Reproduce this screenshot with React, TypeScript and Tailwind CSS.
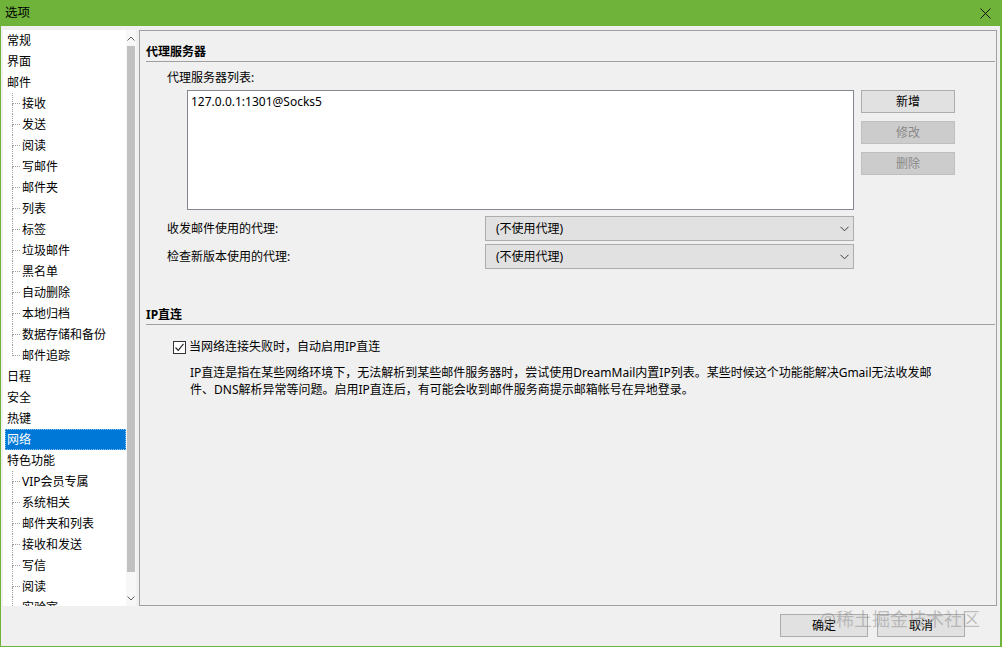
import React from "react";

type Item = { label: string; child?: boolean; last?: boolean; selected?: boolean };

const items: Item[] = [
  { label: "常规" },
  { label: "界面" },
  { label: "邮件" },
  { label: "接收", child: true },
  { label: "发送", child: true },
  { label: "阅读", child: true },
  { label: "写邮件", child: true },
  { label: "邮件夹", child: true },
  { label: "列表", child: true },
  { label: "标签", child: true },
  { label: "垃圾邮件", child: true },
  { label: "黑名单", child: true },
  { label: "自动删除", child: true },
  { label: "本地归档", child: true },
  { label: "数据存储和备份", child: true },
  { label: "邮件追踪", child: true, last: true },
  { label: "日程" },
  { label: "安全" },
  { label: "热键" },
  { label: "网络", selected: true },
  { label: "特色功能" },
  { label: "VIP会员专属", child: true },
  { label: "系统相关", child: true },
  { label: "邮件夹和列表", child: true },
  { label: "接收和发送", child: true },
  { label: "写信", child: true },
  { label: "阅读", child: true },
  { label: "实验室", child: true },
];

function TreeRow({ item }: { item: Item }) {
  if (item.child) {
    return (
      <div className="flex h-[21px] shrink-0 items-stretch">
        <div className="ml-[9px] flex w-[8px] flex-col">
          <div className="h-[11px] border-l border-b border-dotted border-[#a0a0a0]" />
          <div className={item.last ? "flex-1" : "flex-1 border-l border-dotted border-[#a0a0a0]"} />
        </div>
        <div className="ml-[2px] flex items-center whitespace-nowrap leading-[16px]">{item.label}</div>
      </div>
    );
  }
  return (
    <div className="flex h-[21px] shrink-0 items-stretch">
      <div
        className={
          item.selected
            ? "ml-[2px] flex flex-1 items-center border border-dotted border-[#8cc4f0] bg-[#0078d7] pl-[1px] text-white leading-[16px]"
            : "ml-[2px] flex flex-1 items-center pl-[2px] leading-[16px]"
        }
      >
        {item.label}
      </div>
    </div>
  );
}

function Chevron() {
  return (
    <svg width="9" height="6" viewBox="0 0 9 6">
      <path d="M0.5 0.8 L4.5 4.8 L8.5 0.8" fill="none" stroke="#3a3a3a" strokeWidth="1" />
    </svg>
  );
}

function Combo() {
  return (
    <div className="flex h-[25px] w-[369px] items-center justify-between border border-[#adadad] bg-[#e1e1e1] pl-[10px] pr-[4px] leading-[16px]">
      <span>(不使用代理)</span>
      <Chevron />
    </div>
  );
}

function Btn({ label, disabled, w = "w-[94px]" }: { label: string; disabled?: boolean; w?: string }) {
  return (
    <div
      className={
        disabled
          ? `flex h-[23px] ${w} items-center justify-center border border-[#bfbfbf] bg-[#cccccc] text-[#8a8a8a] leading-[16px]`
          : `flex h-[23px] ${w} items-center justify-center border border-[#adadad] bg-[#e1e1e1] leading-[16px]`
      }
    >
      {label}
    </div>
  );
}

export default function App() {
  return (
    <div className="relative flex h-[647px] w-[1002px] flex-col overflow-hidden border-b border-l border-r-2 border-[#6fb33b] bg-[#f0f0f0] font-['Noto_Sans','Noto_Sans_CJK_SC',sans-serif] text-[12px] text-black">
      {/* Title bar */}
      <div className="flex h-[26px] shrink-0 items-center justify-between bg-[#6fb33b] pl-[4px] pr-[9px]">
        <span className="text-[12.5px] leading-[16px]">选项</span>
        <svg width="11" height="11" viewBox="0 0 11 11">
          <path d="M0.5 0.5 L10.5 10.5 M10.5 0.5 L0.5 10.5" stroke="#111" strokeWidth="1" />
        </svg>
      </div>

      {/* Body */}
      <div className="flex h-[580px] shrink-0 pl-[2px] pr-[3px] pt-[4px]">
        {/* Tree */}
        <div className="flex h-[576px] w-[133px] shrink-0 bg-white">
          <div className="flex flex-1 flex-col overflow-hidden">
            {items.map((it, i) => (
              <TreeRow key={i} item={it} />
            ))}
          </div>
          <div className="flex w-[10px] flex-col items-center bg-[#f7f7f7]">
            <div className="flex h-[16px] items-center justify-center">
              <svg width="8" height="5" viewBox="0 0 8 5">
                <path d="M0.5 4.5 L4 1 L7.5 4.5" fill="none" stroke="#606060" strokeWidth="1" />
              </svg>
            </div>
            <div className="h-[526px] w-[8px] bg-[#c1c1c1]" />
            <div className="flex-1" />
            <div className="flex h-[16px] items-center justify-center">
              <svg width="8" height="5" viewBox="0 0 8 5">
                <path d="M0.5 0.5 L4 4 L7.5 0.5" fill="none" stroke="#606060" strokeWidth="1" />
              </svg>
            </div>
          </div>
        </div>

        {/* Right panel */}
        <div className="ml-[3px] flex h-[576px] flex-1 flex-col border border-[#a0a0a0] pl-[6px] pr-[1px]">
          <div className="mt-[13px] border-b border-[#a0a0a0] pb-[1px] font-bold leading-[16px]">代理服务器</div>
          <div className="ml-[21px] mt-[8px] leading-[16px]">代理服务器列表:</div>
          <div className="ml-[41px] mt-[4px] flex">
            <div className="h-[120px] w-[667px] border border-[#828790] bg-white pl-[3px] pt-[3px] leading-[16px]">
              127.0.0.1:1301@Socks5
            </div>
            <div className="ml-[7px] flex flex-col gap-[8px]">
              <Btn label="新增" />
              <Btn label="修改" disabled />
              <Btn label="删除" disabled />
            </div>
          </div>
          <div className="ml-[21px] mt-[6px] flex flex-col gap-[3px]">
            <div className="flex items-center">
              <div className="w-[318px] leading-[16px]">收发邮件使用的代理:</div>
              <Combo />
            </div>
            <div className="flex items-center">
              <div className="w-[318px] leading-[16px]">检查新版本使用的代理:</div>
              <Combo />
            </div>
          </div>

          <div className="mt-[38px] border-b border-[#a0a0a0] pb-[1px] font-bold leading-[16px]">IP直连</div>
          <div className="ml-[27px] mt-[14px] flex items-center">
            <div className="flex h-[13px] w-[13px] items-center justify-center border border-[#333333] bg-white">
              <svg width="11" height="11" viewBox="0 0 11 11">
                <path d="M1.5 5.5 L4.2 8.3 L9.5 1.8" fill="none" stroke="#222" strokeWidth="1.1" />
              </svg>
            </div>
            <span className="ml-[3px] leading-[16px]">当网络连接失败时，自动启用IP直连</span>
          </div>
          <div className="ml-[44px] mt-[9px] flex flex-col leading-[17px]">
            <div className="whitespace-nowrap">
              IP直连是指在某些网络环境下，无法解析到某些邮件服务器时，尝试使用DreamMail内置IP列表。某些时候这个功能能解决Gmail无法收发邮
            </div>
            <div className="whitespace-nowrap">件、DNS解析异常等问题。启用IP直连后，有可能会收到邮件服务商提示邮箱帐号在异地登录。</div>
          </div>
        </div>
      </div>

      {/* Footer */}
      <div className="mt-[8px] flex justify-end gap-[9px] pr-[35px]">
        <Btn label="确定" w="w-[88px]" />
        <Btn label="取消" w="w-[88px]" />
      </div>

      {/* Watermark */}
      <div className="pointer-events-none absolute right-[20px] top-[607px] whitespace-nowrap text-[18px] leading-[24px] text-[rgba(140,140,140,0.5)]">
        @稀土掘金技术社区
      </div>
    </div>
  );
}
